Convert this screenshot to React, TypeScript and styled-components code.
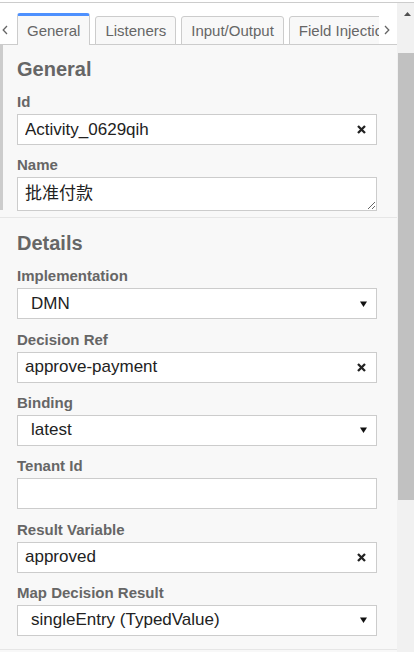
import React from 'react';
import styled, { createGlobalStyle } from 'styled-components';

const GlobalStyle = createGlobalStyle`
  html, body {
    margin: 0;
    padding: 0;
    background: #fff;
  }
  body {
    font-family: 'Liberation Sans', Arial, 'Noto Sans CJK SC', sans-serif;
  }
  * {
    box-sizing: border-box;
  }
`;

const Frame = styled.div`
  width: 414px;
  height: 652px;
  overflow: hidden;
  display: flex;
  flex-direction: column;
  background: #fff;
`;

const TopRule = styled.div`
  flex: none;
  height: 3px;
  border-bottom: 1px solid #ccc;
`;

const Body = styled.div`
  flex: 1;
  min-height: 0;
  display: flex;
`;

const Panel = styled.div`
  flex: 1;
  min-width: 0;
  display: flex;
  flex-direction: column;
  background: #f8f8f8;
`;

const TabBar = styled.div`
  flex: none;
  height: 42px;
  display: flex;
  align-items: flex-end;
  background: #fff;
  border-bottom: 1px solid #ccc;
`;

const ScrollButton = styled.div<{ $width: number; $pad: number }>`
  flex: none;
  width: ${(p) => p.$width}px;
  height: 28px;
  padding-left: ${(p) => p.$pad}px;
  display: flex;
  align-items: center;
  background: #fff;
  color: #666;
`;

const TabStrip = styled.div`
  flex: 1;
  min-width: 0;
  align-self: stretch;
  margin-bottom: -1px;
  display: flex;
  align-items: flex-end;
  gap: 5px;
  overflow: hidden;
`;

const Tab = styled.div<{ $active?: boolean }>`
  flex: none;
  white-space: nowrap;
  font-size: 15px;
  line-height: 17px;
  color: #666;
  background: #f8f8f8;
  border: 1px solid #ccc;
  border-radius: 3px 3px 0 0;
  padding: 5px 9px;
  ${(p) =>
    p.$active &&
    `
    border-top: 3px solid #4d90fe;
    border-bottom: none;
    padding-top: 6px;
    padding-bottom: 6px;
  `}
`;

const Group = styled.section<{ $top: number; $bottom: number; $divided?: boolean; $hover?: boolean }>`
  position: relative;
  padding: ${(p) => p.$top}px 20px ${(p) => p.$bottom}px 17px;
  border-top: ${(p) => (p.$divided ? '1px solid #e6e6e6' : 'none')};
  border-bottom: ${(p) => (p.$divided ? '1px solid #e6e6e6' : 'none')};

  ${(p) =>
    p.$hover &&
    `
    &::before {
      content: '';
      position: absolute;
      left: 0;
      top: 0;
      bottom: 7px;
      width: 3px;
      background: #ccc;
    }
  `}
`;

const GroupTitle = styled.h2`
  margin: 0 0 12px;
  font-size: 20px;
  line-height: 23px;
  font-weight: bold;
  color: #666;
`;

const Field = styled.div`
  margin-bottom: 11.33px;

  &:last-child {
    margin-bottom: 0;
  }
`;

const Label = styled.label`
  display: block;
  margin-bottom: 4px;
  font-size: 15px;
  line-height: 17px;
  font-weight: bold;
  color: #666;
`;

const TextBox = styled.div`
  height: 31px;
  display: flex;
  align-items: center;
  background: #fff;
  border: 1px solid #ccc;
`;

const TextInput = styled.input`
  flex: 1;
  min-width: 0;
  height: 100%;
  padding: 0 0 0 7px;
  border: none;
  outline: none;
  background: transparent;
  font-family: 'Liberation Sans', Arial, sans-serif;
  font-size: 17px;
  color: #222;
`;

const ClearButton = styled.button`
  flex: none;
  height: 100%;
  padding: 0 10px 0 6px;
  display: flex;
  align-items: center;
  border: none;
  background: none;
  color: #222;
`;

const SelectBox = styled.div`
  height: 31px;
  display: flex;
  align-items: center;
  justify-content: space-between;
  padding: 0 9px 0 13px;
  background: #fff;
  border: 1px solid #ccc;
  font-size: 17px;
  color: #222;
`;

const TextArea = styled.textarea`
  display: block;
  width: 100%;
  height: 34px;
  margin: 0;
  padding: 6px 7px;
  border: 1px solid #ccc;
  background: #fff;
  outline: none;
  overflow: hidden;
  font-family: 'Liberation Sans', Arial, 'Noto Sans CJK SC', sans-serif;
  font-size: 17px;
  line-height: 20px;
  color: #222;
`;

const ScrollTrack = styled.div`
  flex: none;
  width: 17px;
  display: flex;
  flex-direction: column;
  background: #f1f1f1;
`;

const ScrollArrow = styled.div`
  height: 22px;
  padding-left: 3px;
  display: flex;
  align-items: center;
  justify-content: center;
`;

const ScrollThumb = styled.div`
  margin: 28px 0 0 1px;
  height: 447px;
  background: #c1c1c1;
`;

const Chevron = ({ dir }: { dir: 'left' | 'right' }) => (
  <svg width="6" height="10" viewBox="0 0 6 10">
    <polyline
      points={dir === 'left' ? '5,1 1.2,5 5,9' : '1,1 4.8,5 1,9'}
      fill="none"
      stroke="currentColor"
      strokeWidth="1.3"
    />
  </svg>
);

const ClearIcon = () => (
  <svg width="9" height="9" viewBox="0 0 9 9">
    <path d="M1 1 L8 8 M8 1 L1 8" stroke="currentColor" strokeWidth="2.3" />
  </svg>
);

const DropArrow = () => (
  <svg width="7" height="6" viewBox="0 0 7 6">
    <polygon points="0,0.5 7,0.5 3.5,6" fill="#111" />
  </svg>
);

type FieldDef =
  | { kind: 'text'; label: string; value: string }
  | { kind: 'select'; label: string; value: string }
  | { kind: 'area'; label: string; value: string };

const general: FieldDef[] = [
  { kind: 'text', label: 'Id', value: 'Activity_0629qih' },
  { kind: 'area', label: 'Name', value: '批准付款' },
];

const details: FieldDef[] = [
  { kind: 'select', label: 'Implementation', value: 'DMN' },
  { kind: 'text', label: 'Decision Ref', value: 'approve-payment' },
  { kind: 'select', label: 'Binding', value: 'latest' },
  { kind: 'text', label: 'Tenant Id', value: '' },
  { kind: 'text', label: 'Result Variable', value: 'approved' },
  { kind: 'select', label: 'Map Decision Result', value: 'singleEntry (TypedValue)' },
];

// the strip is scrolled to the start, so the last tab is cut by the arrow
const tabs = ['General', 'Listeners', 'Input/Output', 'Field Injections'];

function FieldRow({ field }: { field: FieldDef }) {
  return (
    <Field>
      <Label>{field.label}</Label>
      {field.kind === 'text' && (
        <TextBox>
          <TextInput readOnly defaultValue={field.value} />
          {field.value && (
            <ClearButton>
              <ClearIcon />
            </ClearButton>
          )}
        </TextBox>
      )}
      {field.kind === 'select' && (
        <SelectBox>
          <span>{field.value}</span>
          <DropArrow />
        </SelectBox>
      )}
      {field.kind === 'area' && <TextArea readOnly defaultValue={field.value} />}
    </Field>
  );
}

export default function App() {
  return (
    <>
      <GlobalStyle />
      <Frame>
        <TopRule />
        <Body>
          <Panel>
            <TabBar>
              <ScrollButton $width={17} $pad={2}>
                <Chevron dir="left" />
              </ScrollButton>
              <TabStrip>
                {tabs.map((t, i) => (
                  <Tab key={t} $active={i === 0}>
                    {t}
                  </Tab>
                ))}
              </TabStrip>
              <ScrollButton $width={18} $pad={5}>
                <Chevron dir="right" />
              </ScrollButton>
            </TabBar>

            <Group $top={13} $bottom={6} $hover>
              <GroupTitle>General</GroupTitle>
              {general.map((f) => (
                <FieldRow key={f.label} field={f} />
              ))}
            </Group>

            <Group $top={14} $bottom={13} $divided>
              <GroupTitle>Details</GroupTitle>
              {details.map((f) => (
                <FieldRow key={f.label} field={f} />
              ))}
            </Group>
          </Panel>

          <ScrollTrack>
            <ScrollArrow>
              <svg width="7" height="4" viewBox="0 0 7 4">
                <polygon points="0,4 7,4 3.5,0" fill="#505050" />
              </svg>
            </ScrollArrow>
            <ScrollThumb />
          </ScrollTrack>
        </Body>
      </Frame>
    </>
  );
}
